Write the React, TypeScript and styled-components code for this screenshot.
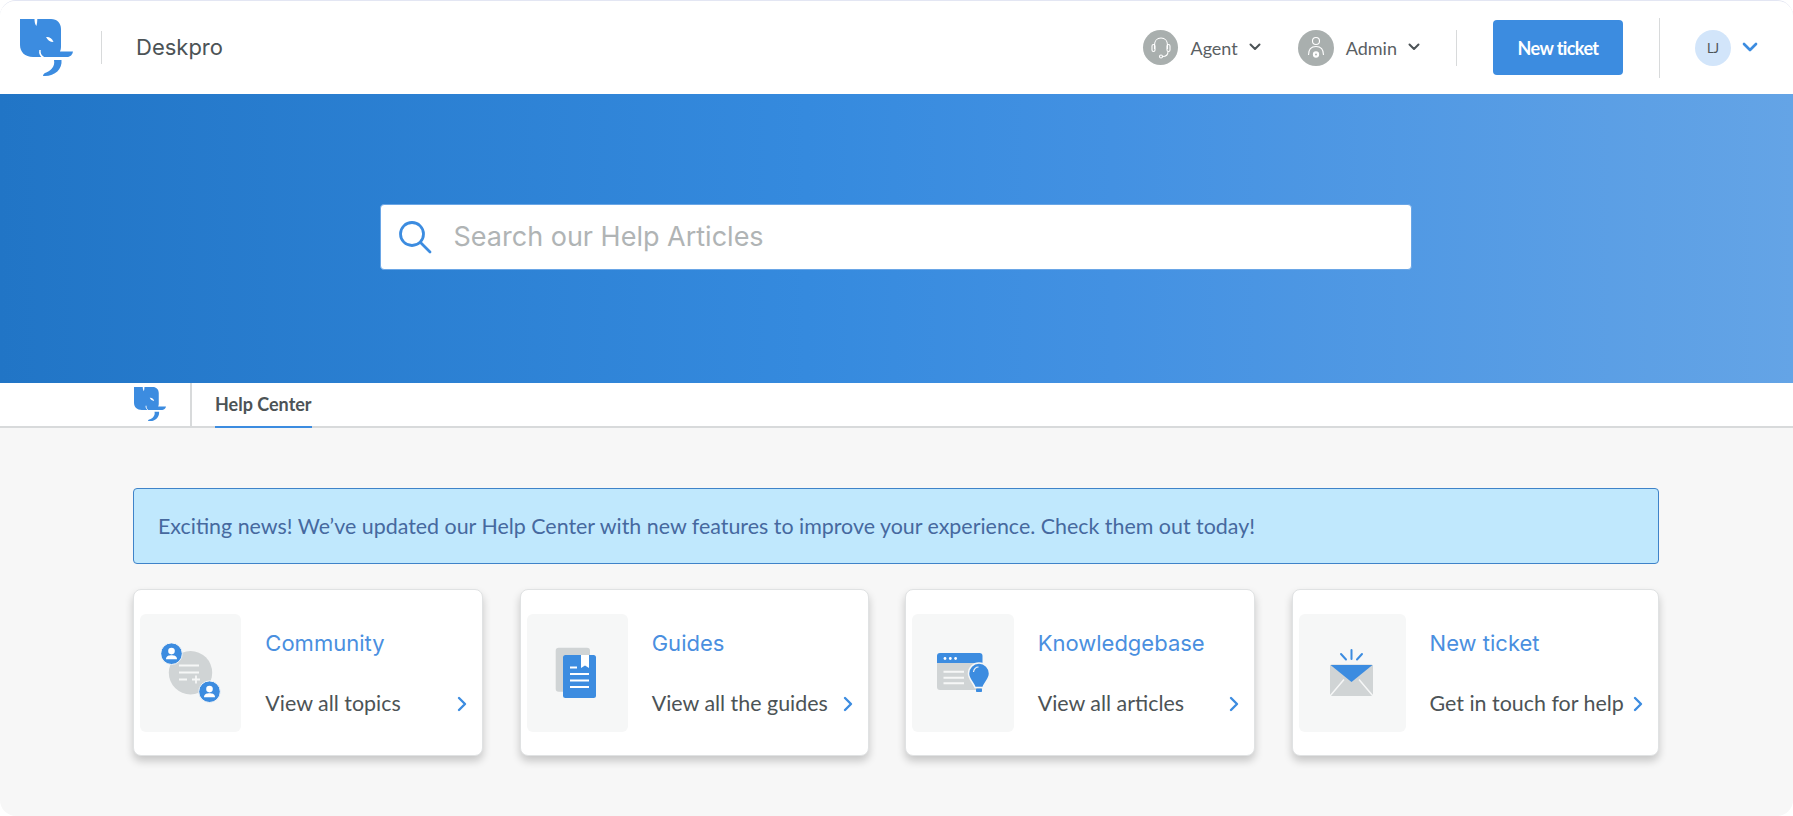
import styled, { createGlobalStyle } from "styled-components";

const GlobalStyle = createGlobalStyle`
  html, body {
    margin: 0;
    padding: 0;
    background: #fff;
  }
  * {
    box-sizing: border-box;
  }
`;

const Frame = styled.div`
  width: 1793px;
  height: 816px;
  display: flex;
  flex-direction: column;
  overflow: hidden;
  background: #f7f7f7;
  border-top: 1px solid #e3e6f3;
  border-radius: 16px;
  font-family: "Lato", "Liberation Sans", sans-serif;
`;

const Header = styled.header`
  height: 93px;
  flex: none;
  display: flex;
  align-items: center;
  padding: 0 35px 0 20px;
  background: #fff;
`;

const VLine = styled.span<{ $h: number }>`
  width: 1px;
  height: ${({ $h }) => $h}px;
  flex: none;
  background: #d8dadb;
`;

const Brand = styled.span`
  margin: 0 auto 2px 34px;
  font-family: "Inter", "Noto Sans", sans-serif;
  font-size: 22px;
  color: #4c5356;
`;

const Role = styled.div<{ $gap: number }>`
  display: flex;
  align-items: center;
  margin-right: ${({ $gap }) => $gap}px;
  font-size: 18px;
  color: #5a6063;
`;

const Avatar = styled.span<{ $size: number }>`
  width: ${({ $size }) => $size}px;
  height: ${({ $size }) => $size}px;
  margin-right: 12px;
  display: flex;
  align-items: center;
  justify-content: center;
  border-radius: 50%;
  background: #a9afae;
`;

const Caret = styled.svg<{ $blue?: boolean }>`
  margin-left: 11px;
  fill: none;
  stroke: ${({ $blue }) => ($blue ? "#3c8ce0" : "#4c5356")};
  stroke-width: 2;
  stroke-linecap: round;
  stroke-linejoin: round;
`;

const NewTicket = styled.button`
  width: 130px;
  height: 55px;
  margin: 0 36px;
  border: none;
  border-radius: 4px;
  background: #3c8ce0;
  color: #fff;
  font-family: inherit;
  font-size: 18px;
  font-weight: 700;
  letter-spacing: -0.6px;
`;

const UserChip = styled.span`
  width: 36px;
  height: 36px;
  margin-left: 35px;
  display: flex;
  align-items: center;
  justify-content: center;
  border-radius: 50%;
  background: #d2e5fa;
  color: #4c5356;
  font-size: 13px;
`;

const Hero = styled.section`
  height: 289px;
  flex: none;
  display: flex;
  align-items: center;
  justify-content: center;
  padding-bottom: 4px;
  background: linear-gradient(90deg, #2175c6 0%, #358ade 45%, #4391e2 62%, #64a4e6 100%);
`;

const SearchBox = styled.label`
  width: 1032px;
  height: 66px;
  margin-left: -2px;
  display: flex;
  align-items: center;
  padding-left: 17px;
  border: 1px solid #6aa6e6;
  border-radius: 4px;
  background: #fff;
`;

const SearchInput = styled.input`
  flex: 1;
  margin-left: 20px;
  border: none;
  outline: none;
  background: transparent;
  font-family: "Inter", "Noto Sans", sans-serif;
  font-size: 27px;
  color: #4c5356;

  &::placeholder {
    color: #b0b4b5;
    opacity: 1;
  }
`;

const Nav = styled.nav`
  height: 45px;
  flex: none;
  display: flex;
  padding-left: 134px;
  background: #fff;
  border-bottom: 2px solid #d8dadb;
`;

const NavLogo = styled.div`
  width: 58px;
  padding-top: 4px;
  border-right: 2px solid #d8dadb;
`;

const Tab = styled.a`
  height: 45px;
  margin-left: 23px;
  padding-top: 10px;
  border-bottom: 2px solid #3c8ce0;
  font-size: 18px;
  font-weight: 700;
  color: #4c5356;
`;

const Main = styled.main`
  flex: 1;
  padding: 60px 134px 0 133px;
`;

const Alert = styled.div`
  height: 76px;
  display: flex;
  align-items: center;
  padding-left: 24px;
  border: 1px solid #3f83c9;
  border-radius: 4px;
  background: #c0e8fd;
  color: #46699f;
  font-size: 21.42px;
`;

const Cards = styled.div`
  margin-top: 25px;
  display: grid;
  grid-template-columns: 350px 349px 350px 367px;
  justify-content: space-between;
`;

const Card = styled.a`
  height: 167px;
  display: flex;
  align-items: center;
  padding: 0 15px 0 6px;
  border: 1px solid #e0e2e3;
  border-radius: 8px;
  background: #fff;
  box-shadow: 0 5px 9px rgba(0, 0, 0, 0.2);
`;

const Thumb = styled.div`
  width: 31%;
  height: 118px;
  flex: none;
  display: flex;
  align-items: center;
  justify-content: center;
  border-radius: 6px;
  background: #f6f7f7;
`;

const CardBody = styled.div`
  flex: 1;
  min-width: 0;
  margin-left: 24px;
  display: flex;
  flex-direction: column;
  gap: 32px;
`;

const CardTitle = styled.div`
  font-family: "Inter", "Noto Sans", sans-serif;
  font-size: 22px;
  line-height: 28px;
  color: #4a8fdf;
`;

const CardRow = styled.div`
  display: flex;
  align-items: center;
  justify-content: space-between;
  font-size: 21.42px;
  line-height: 28px;
  color: #4c5356;
`;

const Arrow = styled.svg`
  flex: none;
  margin-top: 3px;
  fill: none;
  stroke: #3c8ce0;
  stroke-width: 2.4;
  stroke-linecap: round;
  stroke-linejoin: round;
`;

function Logo({ size }: { size: number }) {
  return (
    <svg width={size} height={size * (57 / 53)} viewBox="0 0 53 57" style={{ flex: "none" }}>
      <path
        fill="#3c8ce0"
        d="M0 0H31C37 0 41 4 41 10V28C41 29.500 40.700 31 40 32.500H53C52.500 35.500 50.500 38 47 38H13C5 38 0 33 0 26Z"
      />
      <path fill="#fff" d="M14.500 0H17.300C17.300 2.500 17 5 16.300 7C15 5 14.500 3 14.500 0Z" />
      <path fill="#fff" d="M26 18C29 17.500 32 19 33.500 23C30 23 27.500 21 26 18Z" />
      <path d="M20 31C19.500 34 21 37 23.500 38.500" stroke="#fff" strokeWidth="1.500" fill="none" />
      <path fill="#3c8ce0" d="M34 41H41.500C42.500 50 35 57 25 57H23C23 55.500 24 54.500 25 54C30 52.500 35.500 48 34 41Z" />
    </svg>
  );
}

function Chevron({ blue, size = 12 }: { blue?: boolean; size?: number }) {
  return (
    <Caret $blue={blue} width={size} height={size * 0.67} viewBox="0 0 12 8">
      <path d="M1.500 1.500L6 6L10.500 1.500" />
    </Caret>
  );
}

function Headset() {
  return (
    <svg width="24" height="26" viewBox="0 0 24 26" fill="none" stroke="#fff" strokeWidth="1.100">
      <path d="M5.500 14V10C5.500 6 8 3 12 3C16 3 18.500 6 18.500 10V14" />
      <rect x="3" y="9.500" width="3" height="7" rx="1.500" />
      <rect x="18" y="9.500" width="3" height="7" rx="1.500" />
      <path d="M19 16.500C19 20 17 21.500 13.500 21.500" />
      <circle cx="12" cy="21.500" r="1.500" />
    </svg>
  );
}

function AdminIcon() {
  return (
    <svg width="24" height="28" viewBox="0 0 24 28" fill="none" stroke="#fff" strokeWidth="1.100">
      <circle cx="12" cy="7" r="3.500" />
      <path d="M4.500 21C4.500 15.500 7.500 12.500 12 12.500C16.500 12.500 19.500 15.500 19.500 21" />
      <circle cx="12" cy="20.500" r="2.600" fill="#fff" />
      <circle cx="12" cy="20.500" r="0.900" fill="#a9afae" stroke="none" />
    </svg>
  );
}

function CommunityIcon() {
  return (
    <svg width="60" height="60" viewBox="0 0 60 60">
      <circle cx="29.500" cy="29.700" r="21.700" fill="#d0d4d5" />
      <path
        d="M18 22.500H38M18 29.500H38M18 36.500H26M31 36.500H39M35 32.500V40.500"
        stroke="#f6f7f7"
        strokeWidth="1.800"
        fill="none"
      />
      {[[10.500, 10.700], [48.500, 48.700]].map(([x, y]) => (
        <g key={x}>
          <circle cx={x} cy={y} r="10.800" fill="#3c8ce0" stroke="#f6f7f7" strokeWidth="1" />
          <circle cx={x} cy={y - 2.600} r="3.300" fill="#fff" />
          <path
            d={`M${x - 5.500} ${y + 5.500}C${x - 5.500} ${y + 2} ${x - 2.500} ${y + 1.500} ${x} ${y + 1.500}C${x + 2.500} ${y + 1.500} ${x + 5.500} ${y + 2} ${x + 5.500} ${y + 5.500}Z`}
            fill="#fff"
          />
        </g>
      ))}
    </svg>
  );
}

function GuidesIcon() {
  return (
    <svg width="60" height="60" viewBox="0 0 60 60">
      <rect x="8.700" y="4.700" width="34.300" height="44" rx="3" fill="#d0d4d5" />
      <rect x="16" y="12" width="33" height="43" rx="2.500" fill="#3c8ce0" />
      <path d="M34 12H42V25L38 22.500L34 25Z" fill="#fff" />
      <path d="M23 24.500H30M23 31H42M23 37.500H42M23 44H42" stroke="#fff" strokeWidth="2" />
    </svg>
  );
}

function KnowledgeIcon() {
  return (
    <svg width="60" height="60" viewBox="0 0 60 60">
      <path d="M4 20H49.500V44A3 3 0 0 1 46.500 47H7A3 3 0 0 1 4 44Z" fill="#d0d4d5" />
      <path d="M4 20V13A3 3 0 0 1 7 10H46.500A3 3 0 0 1 49.500 13V20Z" fill="#3c8ce0" />
      <circle cx="12" cy="15.500" r="1.400" fill="#fff" />
      <circle cx="17.300" cy="15.500" r="1.400" fill="#fff" />
      <circle cx="22.600" cy="15.500" r="1.400" fill="#fff" />
      <path d="M10.500 28.700H31M10.500 34.700H31M10.500 40.300H31" stroke="#f6f7f7" strokeWidth="2" />
      <path
        d="M46 20C40 20 35.500 25 35.500 30.500C35.500 36 40 39 42 44.500H50C52 39 56.500 36 56.500 30.500C56.500 25 52 20 46 20Z"
        fill="#3c8ce0"
        stroke="#f6f7f7"
        strokeWidth="1.500"
      />
      <rect x="43" y="45.500" width="6" height="3.500" rx="0.800" fill="#3c8ce0" />
      <path d="M40.500 29C41 26 43 24 45.500 24" stroke="#f6f7f7" strokeWidth="1.200" fill="none" />
    </svg>
  );
}

function TicketIcon() {
  return (
    <svg width="60" height="60" viewBox="0 0 60 60">
      <rect x="8" y="21.500" width="43" height="31.500" rx="1.500" fill="#d0d4d5" />
      <path d="M8.500 22H50.500L29.500 39Z" fill="#3c8ce0" />
      <path d="M8 53L22 36.500M51 53L37 36.500" stroke="#f6f7f7" strokeWidth="1.500" />
      <path
        d="M29.500 7V16M19 11L24 16.500M40 11L35 16.500"
        stroke="#3c8ce0"
        strokeWidth="2"
        strokeLinecap="round"
      />
    </svg>
  );
}

const links = [
  { title: "Community", sub: "View all topics", icon: <CommunityIcon /> },
  { title: "Guides", sub: "View all the guides", icon: <GuidesIcon /> },
  { title: "Knowledgebase", sub: "View all articles", icon: <KnowledgeIcon /> },
  { title: "New ticket", sub: "Get in touch for help", icon: <TicketIcon /> },
];

export default function App() {
  return (
    <Frame>
      <GlobalStyle />
      <Header>
        <Logo size={53} />
        <VLine $h={33} style={{ marginLeft: 28 }} />
        <Brand>Deskpro</Brand>
        <Role $gap={37}>
          <Avatar $size={35}>
            <Headset />
          </Avatar>
          Agent
          <Chevron />
        </Role>
        <Role $gap={36}>
          <Avatar $size={36}>
            <AdminIcon />
          </Avatar>
          Admin
          <Chevron />
        </Role>
        <VLine $h={36} />
        <NewTicket>New ticket</NewTicket>
        <VLine $h={60} />
        <UserChip>LJ</UserChip>
        <Chevron blue size={16} />
      </Header>
      <Hero>
        <SearchBox>
          <svg width="34" height="34" viewBox="0 0 34 34" fill="none" stroke="#3c8ce0" strokeWidth="2.800" strokeLinecap="round">
            <circle cx="14" cy="14" r="11.500" />
            <path d="M22.500 22.500L32 32" />
          </svg>
          <SearchInput placeholder="Search our Help Articles" readOnly />
        </SearchBox>
      </Hero>
      <Nav>
        <NavLogo>
          <Logo size={32} />
        </NavLogo>
        <Tab>Help Center</Tab>
      </Nav>
      <Main>
        <Alert>
          Exciting news! We’ve updated our Help Center with new features to improve your experience. Check them out today!
        </Alert>
        <Cards>
          {links.map((link) => (
            <Card key={link.title}>
              <Thumb>{link.icon}</Thumb>
              <CardBody>
                <CardTitle>{link.title}</CardTitle>
                <CardRow>
                  {link.sub}
                  <Arrow width="10" height="16" viewBox="0 0 10 16">
                    <path d="M2 2L8 8L2 14" />
                  </Arrow>
                </CardRow>
              </CardBody>
            </Card>
          ))}
        </Cards>
      </Main>
    </Frame>
  );
}
